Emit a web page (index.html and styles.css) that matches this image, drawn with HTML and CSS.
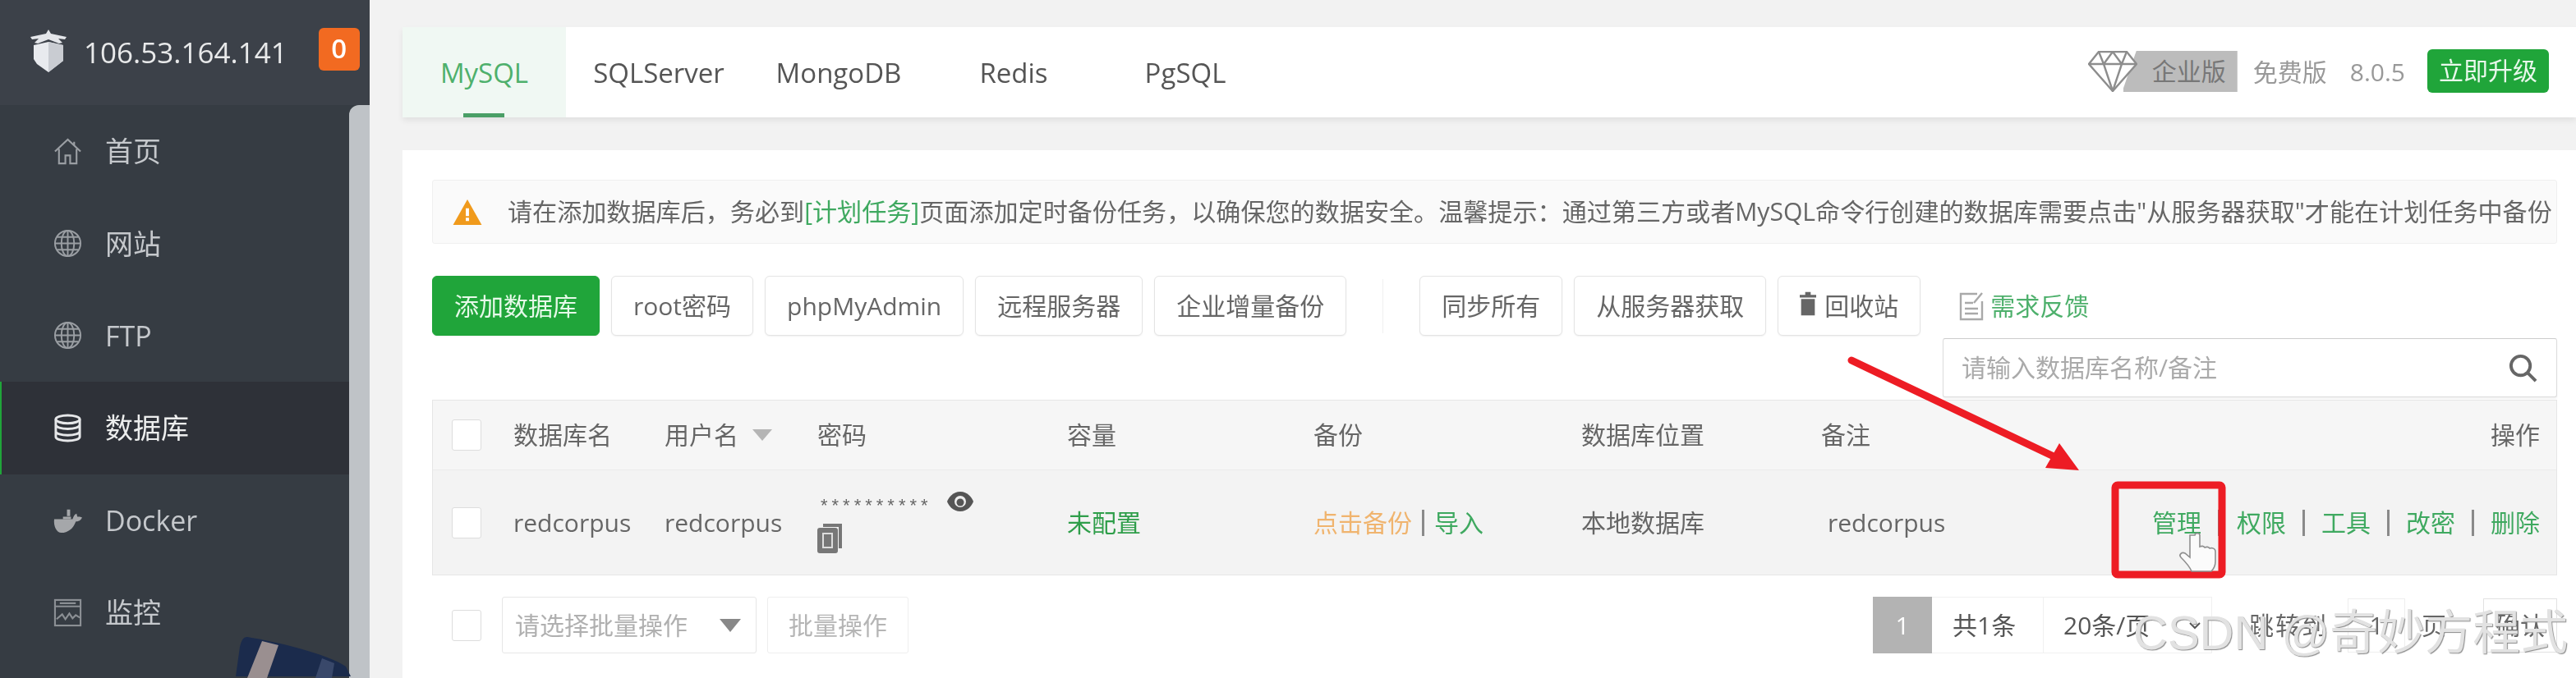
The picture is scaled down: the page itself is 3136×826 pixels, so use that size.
FILE: index.html
```html
<!DOCTYPE html>
<html lang="zh-CN">
<head>
<meta charset="utf-8">
<title>数据库</title>
<link rel="stylesheet" href="styles.css">
</head>
<body>
<div class="app">
  <aside class="sidebar">
    <header class="brand">
      <svg class="brand-logo" viewBox="0 0 46 52"><path d="M23 0l3 5 19 4-2 3-8-1 5 5-4 1-13-5-13 5-4-1 5-5-8 1-2-3 19-4z" fill="#e4e6ea"/><path d="M5 19l18-4 18 4v19L23 52 9 42 5 36z" fill="#e8eaee"/><path d="M23 15l18 4v19L23 52z" fill="#c9ccd2"/></svg>
      <span class="brand-ip">106.53.164.141</span>
      <span class="brand-badge">0</span>
    </header>
    <nav class="menu">
      <a class="menu-item">
        <svg class="menu-icon" viewBox="0 0 36 36" fill="none" stroke="#9a9ea3" stroke-width="2.2"><path d="M2 18L18 3l16 15M7 15v18h8v-10h6v10h8V15M26 6v5"/></svg>
        <span>首页</span>
      </a>
      <a class="menu-item">
        <svg class="menu-icon" viewBox="0 0 36 36" fill="none" stroke="#9a9ea3" stroke-width="2"><circle cx="18" cy="18" r="16"/><ellipse cx="18" cy="18" rx="8" ry="16"/><path d="M18 2v32M2 18h32M5 10h26M5 26h26"/></svg>
        <span>网站</span>
      </a>
      <a class="menu-item">
        <svg class="menu-icon" viewBox="0 0 36 36" fill="none" stroke="#9a9ea3" stroke-width="2"><circle cx="18" cy="18" r="16"/><ellipse cx="18" cy="18" rx="8" ry="16"/><path d="M18 2v32M2 18h32M5 10h26M5 26h26"/></svg>
        <span>FTP</span>
      </a>
      <a class="menu-item is-active">
        <svg class="menu-icon" viewBox="0 0 36 36" fill="none" stroke="#e6e7e9" stroke-width="3"><ellipse cx="18" cy="7" rx="15" ry="5"/><path d="M3 7v22c0 3 7 5 15 5s15-2 15-5V7M3 14c0 3 7 5 15 5s15-2 15-5M3 22c0 3 7 5 15 5s15-2 15-5"/></svg>
        <span>数据库</span>
      </a>
      <a class="menu-item">
        <svg class="menu-icon" viewBox="0 0 36 36"><path d="M1 17h23c1-3 2-6 5-7l1 4c2 0 4 0 6 1-2 4-5 5-8 5-3 9-10 14-18 14C4 34 0 26 1 17z" fill="#a5a7aa"/><path d="M12 14h10v3H12zM17 5h4v8h-4z" fill="#a5a7aa"/></svg>
        <span>Docker</span>
      </a>
      <a class="menu-item">
        <svg class="menu-icon" viewBox="0 0 36 36" fill="none" stroke="#8b8f94" stroke-width="2.2"><rect x="2" y="2" width="32" height="32"/><path d="M2 10h32M8 6h20M4 26l7-6 4 6 5-7 4 6 4-4 5 3"/></svg>
        <span>监控</span>
      </a>
    </nav>
    <div class="side-scroll"></div>
    <svg class="side-photo" viewBox="0 0 140 50"><path d="M14 0c-5 0-7 4-9 12L0 48h140l-6-12C110 20 50 6 14 0z" fill="#1b2b4c"/><path d="M32 5l20 5-14 40H14z" fill="#9a8f90"/><path d="M105 26l15 6-3 18h-20z" fill="#39486a"/></svg>
  </aside>

  <main class="main">
    <section class="tabs-card">
      <div class="tabs">
        <a class="tab is-active">MySQL</a>
        <a class="tab">SQLServer</a>
        <a class="tab">MongoDB</a>
        <a class="tab">Redis</a>
        <a class="tab">PgSQL</a>
      </div>
      <div class="edition">
        <div class="ent">
          <span class="ent-tag">企业版</span>
          <svg class="ent-gem" viewBox="0 0 60 50" fill="#fff" stroke="#8d8d8d" stroke-width="2.4"><path d="M13 1h34l12 15-29 33L1 16z"/><path d="M1 16h58M19 16l11 33 11-33M13 1l6 15 11-15 11 15 6-15" fill="none"/></svg>
        </div>
        <span class="free">免费版</span>
        <span class="version">8.0.5</span>
        <a class="upgrade">立即升级</a>
      </div>
    </section>

    <section class="panel">
      <div class="alert">
        <svg class="alert-icon" viewBox="0 0 36 32"><path d="M18 0l18 32H0z" fill="#f09a1c"/><path d="M16 11h4v10h-4zM16 23h4v4h-4z" fill="#fff"/></svg>
        <p class="alert-text">请在添加数据库后，务必到<a class="link">[计划任务]</a>页面添加定时备份任务，以确保您的数据安全。温馨提示：通过第三方或者MySQL命令行创建的数据库需要点击"从服务器获取"才能在计划任务中备份</p>
      </div>

      <div class="toolbar">
        <a class="btn btn-primary">添加数据库</a>
        <a class="btn">root密码</a>
        <a class="btn">phpMyAdmin</a>
        <a class="btn">远程服务器</a>
        <a class="btn">企业增量备份</a>
        <span class="tool-divider"></span>
        <a class="btn">同步所有</a>
        <a class="btn">从服务器获取</a>
        <a class="btn">
          <svg class="trash" viewBox="0 0 24 34"><path d="M8 0h8v4h8v4H0V4h8zM2 10h20v24H2z" fill="#666"/></svg>
          回收站
        </a>
        <a class="feedback">
          <svg class="feedback-icon" viewBox="0 0 30 36" fill="none" stroke="#a9a9a9" stroke-width="2.4"><path d="M22 3H2v31h26V12M7 14h10M7 21h16M7 27h16M18 14L28 2"/></svg>
          <span>需求反馈</span>
        </a>
      </div>

      <div class="search-row">
        <div class="search">
          <span class="search-text">请输入数据库名称/备注</span>
          <svg class="search-icon" viewBox="0 0 38 36" fill="none" stroke="#666" stroke-width="4"><circle cx="16" cy="15" r="12"/><path d="M25 24l10 10"/></svg>
        </div>
      </div>

      <div class="table">
        <div class="thead grid">
          <span class="check"></span>
          <span>数据库名</span>
          <span class="sort">用户名<i class="caret"></i></span>
          <span>密码</span>
          <span>容量</span>
          <span>备份</span>
          <span>数据库位置</span>
          <span>备注</span>
          <span class="ops">操作</span>
        </div>
        <div class="trow grid">
          <span class="check"></span>
          <span>redcorpus</span>
          <span>redcorpus</span>
          <span class="pw">
            <span class="pw-line"><span class="stars">**********</span>
              <svg class="eye" viewBox="0 0 32 26"><path d="M16 1C7 1 2 8 0 13c2 5 7 12 16 12s14-7 16-12C30 8 25 1 16 1z" fill="#555"/><circle cx="16" cy="13" r="7" fill="#eee"/><circle cx="16" cy="14" r="4.5" fill="#555"/></svg>
            </span>
            <svg class="copy" viewBox="0 0 30 36"><path d="M7 0h23v30h-4V4H7z" fill="#777"/><rect x="0" y="5" width="25" height="31" rx="3" fill="#777"/><path d="M7 12h11v17H7z" fill="none" stroke="#ddd" stroke-width="2"/></svg>
          </span>
          <span class="green-strong">未配置</span>
          <span class="backup"><a class="orange">点击备份</a><i class="sep"></i><a class="link">导入</a></span>
          <span>本地数据库</span>
          <span class="note">redcorpus</span>
          <span class="ops actions">
            <a class="link">管理</a><i class="sep"></i><a class="link">权限</a><i class="sep"></i><a class="link">工具</a><i class="sep"></i><a class="link">改密</a><i class="sep"></i><a class="link">删除</a>
          </span>
        </div>
      </div>

      <div class="footer">
        <span class="check"></span>
        <div class="batch-select"><span>请选择批量操作</span><i class="caret caret-dark"></i></div>
        <a class="batch-btn">批量操作</a>
        <div class="pager">
          <span class="page-current">1</span>
          <div class="page-box">
            <span class="page-total">共1条</span>
            <span class="page-size">20条/页<svg class="chev" viewBox="0 0 14 9" fill="none" stroke="#555" stroke-width="2"><path d="M1 1l6 6 6-6"/></svg></span>
          </div>
          <span class="page-jump">跳转到</span>
          <span class="page-input">1</span>
          <span class="page-unit">页</span>
          <a class="page-go">确认</a>
        </div>
      </div>
    </section>
  </main>

  <svg class="annot" viewBox="0 0 3136 826">
    <path class="arrow-shaft" d="M2254 439L2500 556"/>
    <path d="M2507 540l24 33-41-3z" fill="#ed1c24"/>
    <rect x="2575" y="591" width="130" height="109" rx="3" fill="none" stroke="#ed1c24" stroke-width="9"/>
    <path d="M2672 652c0-3 6-3 6 0v14c2-1 5-1 6 1 2-1 5-1 6 1 3-1 7 0 7 4v12c0 5-3 10-5 12h-24c-2-5-8-12-13-17-3-3 1-7 5-5l6 5v-27z" fill="#fbfbfb" stroke="#8f8f8f" stroke-width="1.6"/>
  </svg>
  <div class="watermark">CSDN @奇妙方程式</div>
</div>
</body>
</html>
```
FILE: styles.css
```css
* { box-sizing: border-box; }
html, body { margin: 0; padding: 0; height: 100%; overflow: hidden; }
body {
  font-family: "Open Sans", "Noto Sans CJK SC", sans-serif;
  font-size: 30px;
  line-height: 40px;
  color: #666;
  background: #f2f2f2;
}
.app { position: relative; display: flex; width: 3136px; height: 826px; overflow: hidden; }

/* Sidebar */
.sidebar { position: relative; flex: 0 0 450px; height: 826px; background: #363c43; overflow: hidden; filter: blur(.6px); }
.brand { display: flex; align-items: center; height: 128px; padding-left: 36px; background: #3c4149; }
.brand-logo { width: 46px; height: 52px; margin-top: -4px; }
.brand-ip { margin-left: 20px; font-size: 35px; color: #e8e9ea; }
.brand-badge { width: 50px; height: 52px; margin-left: 38px; margin-top: -8px; border-radius: 6px; background: #f26a21; color: #fff; font-size: 33px; font-weight: 600; line-height: 50px; text-align: center; }
.menu { display: flex; flex-direction: column; }
.menu-item { display: flex; align-items: center; gap: 28px; height: 112.4px; padding-left: 65px; color: #c5c8cc; font-size: 34px; }
.menu-icon { width: 35px; height: 35px; flex: none; }
.menu-item.is-active { background: #2e3138; color: #eceded; border-left: 2px solid #20a53a; padding-left: 63px; }
.side-scroll { position: absolute; top: 128px; right: 0; bottom: 0; width: 25px; border-radius: 12px 0 0 0; background: #bfc3c7; }
.side-photo { position: absolute; left: 287px; bottom: 0; width: 140px; height: 50px; }

/* Main */
.main { flex: 1; min-width: 0; padding: 33px 0 0 40px; filter: blur(.6px); }
.tabs-card { display: flex; align-items: stretch; height: 110px; background: #fff; box-shadow: 0 4px 7px rgba(0,0,0,.07); }
.tabs { display: grid; grid-template-columns: 199px 226px 212px 214px 204px; }
.tab { position: relative; display: flex; align-items: center; justify-content: center; padding-top: 2px; color: #555; font-size: 33px; }
.tab.is-active { background: #f0f8f3; color: #4eb06c; }
.tab.is-active::after { content: ""; position: absolute; left: 74px; bottom: 0; width: 50px; height: 5px; background: #4a9f66; }

.edition { display: flex; align-items: center; margin-left: auto; padding-right: 33px; }
.ent { position: relative; display: flex; justify-content: flex-end; width: 182px; height: 50px; margin-top: -2px; }
.ent-tag { width: 139px; padding-left: 35px; background: #bcbcbc; color: #777; font-size: 30px; line-height: 50px; clip-path: polygon(16px 0, 100% 0, 100% 100%, 0 100%, 0 92%); }
.ent-gem { position: absolute; left: 0; top: 0; width: 60px; height: 50px; }
.free { margin-left: 19px; color: #999; }
.version { margin-left: 28px; color: #999; }
.upgrade { display: block; width: 148px; height: 53px; margin-left: 27px; margin-top: -4px; border-radius: 6px; background: #20a53a; color: #e9f8ec; font-size: 30px; line-height: 52px; text-align: center; }

.panel { height: 700px; margin-top: 40px; padding: 36px 23px 0 36px; background: #fff; }
.alert { display: flex; align-items: center; height: 78px; padding-left: 24px; border: 1px solid #f0f0f0; background: #fafafa; border-radius: 3px; }
.alert-icon { width: 36px; height: 31px; flex: none; }
.alert-text { margin: 0 0 0 31px; color: #666; font-size: 30.1px; white-space: nowrap; }
.link { color: #3fa960; }

.toolbar { display: flex; align-items: center; height: 73px; margin-top: 39px; gap: 14px; }
.btn { display: flex; align-items: center; height: 73px; padding: 0 26px; border: 1px solid #e4e4e4; border-radius: 6px; background: #fff; color: #666; box-shadow: 0 1px 2px rgba(0,0,0,.06); }
.btn-primary { background: #20a53a; border-color: #20a53a; color: #e6f9e9; }
.tool-divider { width: 1px; height: 66px; margin: 0 30px; background: #f0f0f0; }
.trash { width: 20px; height: 32px; margin-right: 10px; margin-top: -6px; }
.feedback { display: flex; align-items: center; margin-left: 33px; gap: 8px; color: #4eb06c; }
.feedback-icon { width: 30px; height: 36px; }

.search-row { display: flex; justify-content: flex-end; margin-top: 3px; }
.search { display: flex; align-items: center; justify-content: space-between; width: 748px; height: 72px; padding: 0 22px; border: 1px solid #ddd; border-top-color: #ccc; border-radius: 3px; background: #fff; color: #aaa; box-shadow: 0 2px 2px rgba(0,0,0,.05); }
.search-icon { width: 37px; height: 35px; }

.table { margin-top: 3px; border: 1px solid #e6e6e6; }
.grid { display: grid; grid-template-columns: 75px 184px 186px 304px 300px 326px 292px 340px 1fr; align-items: center; padding-left: 23px; padding-right: 20px; white-space: nowrap; }
.thead { height: 85px; background: #f6f6f6; border-bottom: 1px solid #ebebeb; }
.trow { height: 127px; background: #f3f3f3; }
.check { display: block; width: 36px; height: 38px; border: 1px solid #ddd; border-radius: 3px; background: #fff; }
.sort { display: flex; align-items: center; gap: 17px; }
.caret { display: inline-block; width: 0; height: 0; border-left: 12px solid transparent; border-right: 12px solid transparent; border-top: 14px solid #b5b5b5; }
.caret-dark { border-top-color: #888; border-left-width: 13px; border-right-width: 13px; border-top-width: 16px; }
.ops { text-align: right; }
.note { padding-left: 8px; }
.pw { display: flex; flex-direction: column; align-items: flex-start; gap: 2px; }
.pw-line { display: flex; align-items: center; gap: 18px; height: 32px; margin-bottom: 4px; }
.stars { font-family: "Liberation Sans", sans-serif; font-size: 22px; letter-spacing: 5px; padding-left: 4px; color: #666; }
.eye { width: 32px; height: 26px; margin-top: -10px; }
.copy { width: 30px; height: 36px; }
.green-strong { color: #2f9e4a; }
.orange { color: #f0b46e; }
.backup { display: flex; align-items: center; }
.sep { display: inline-block; width: 3px; height: 32px; margin: 0 12px; background: #8a8a8a; }
.actions { display: flex; justify-content: flex-end; align-items: center; }
.actions .sep { margin: 0 20px; }
.actions .link { flex: none; }

.footer { display: flex; align-items: center; height: 69px; margin-top: 26px; padding-left: 24px; }
.batch-select { display: flex; align-items: center; justify-content: space-between; width: 310px; height: 69px; margin-left: 25px; padding: 0 18px 0 15px; border: 1px solid #e6e6e6; border-radius: 3px; color: #b0b0b0; }
.batch-btn { display: flex; align-items: center; justify-content: center; width: 172px; height: 69px; margin-left: 13px; border: 1px solid #eee; border-radius: 3px; color: #b5b5b5; }
.pager { display: flex; align-items: center; margin-left: auto; white-space: nowrap; }
.page-current { width: 72px; height: 69px; background: #b3b3b3; color: #fff; line-height: 69px; text-align: center; }
.page-box { display: flex; height: 69px; width: 341px; border: 1px solid #f0f0f0; border-left: 0; line-height: 67px; color: #555; }
.page-total { width: 136px; padding-left: 25px; border-right: 1px solid #f0f0f0; }
.page-size { position: relative; display: flex; align-items: center; padding-left: 24px; }
.chev { position: absolute; left: 177px; top: 30px; width: 14px; height: 9px; }
.page-jump { margin: 0 30px 0 45px; width: 90px; color: #666; letter-spacing: 2px; }
.page-unit { margin: 0 45px 0 20px; width: 30px; color: #666; }
.page-input { width: 70px; height: 66px; border: 1px solid #eee; text-align: center; line-height: 64px; }
.page-go { width: 90px; height: 66px; border: 1px solid #e2e2e2; text-align: center; line-height: 64px; color: #666; }

/* Overlays on the frame */
.annot { position: absolute; inset: 0; width: 3136px; height: 826px; pointer-events: none; }
.arrow-shaft { fill: none; stroke: #ed1c24; stroke-width: 9; stroke-linecap: round; }
.watermark { position: absolute; left: 2597px; top: 736px; font-family: "Liberation Sans", "Noto Sans CJK SC", sans-serif; font-size: 58px; line-height: 70px; color: #e2e2e2; text-shadow: 1px 1px 1px #8a8a8a; white-space: nowrap; }
```
